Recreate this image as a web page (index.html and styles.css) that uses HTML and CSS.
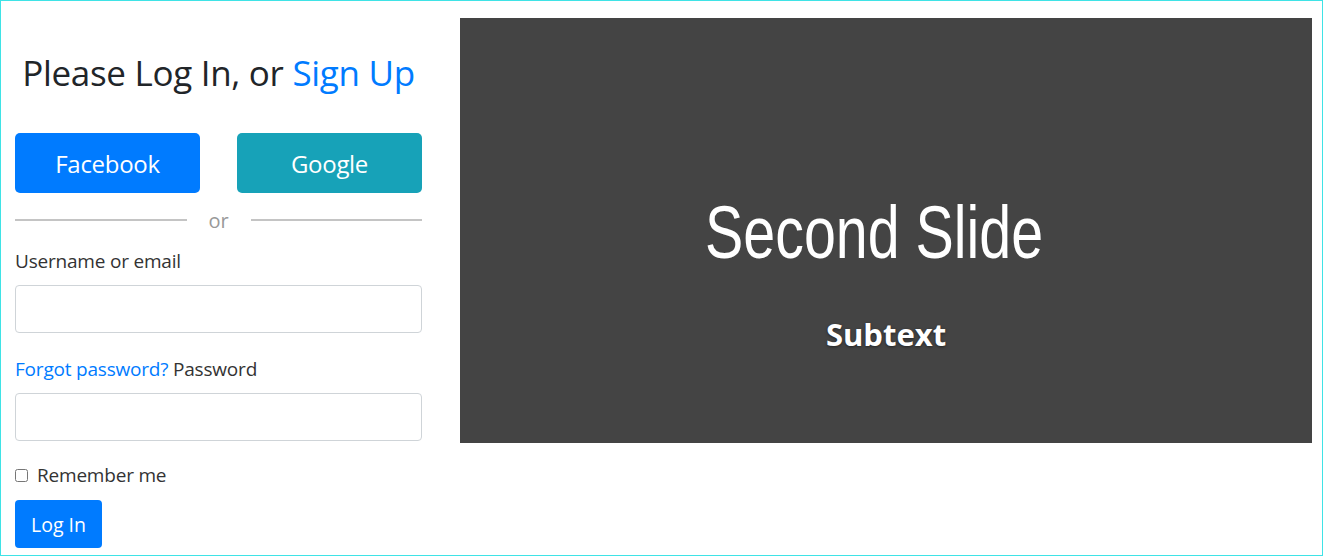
FILE: index.html
```html
<!DOCTYPE html>
<html>
<head>
<meta charset="utf-8">
<link rel="stylesheet" href="styles.css">
</head>
<body>
<div class="frame">
  <div class="login">
    <h2 class="title">Please Log In, or <a href="#" class="link">Sign Up</a></h2>
    <div class="social">
      <a href="#" class="btn btn-fb">Facebook</a>
      <a href="#" class="btn btn-google">Google</a>
    </div>
    <div class="divider"><span class="line"></span><span class="or">or</span><span class="line"></span></div>
    <label class="label">Username or email</label>
    <input class="input" type="text">
    <label class="label"><a href="#" class="link">Forgot password?</a> Password</label>
    <input class="input" type="password">
    <div class="remember"><input type="checkbox" class="check"><span>Remember me</span></div>
    <button class="btn-login">Log In</button>
  </div>
  <div class="slide">
    <div class="slide-title">Second Slide</div>
    <div class="slide-sub">Subtext</div>
  </div>
</div>
</body>
</html>
```
FILE: styles.css
```css
* { box-sizing: border-box; }
html, body { margin: 0; padding: 0; background: #fff; }
body { font-family: "Open Sans", "Noto Sans", sans-serif; color: #212529; }
.frame {
  width: 1323px;
  height: 556px;
  border: 1px solid #3fe3e6;
  display: grid;
  grid-template-columns: 407px 852px;
  column-gap: 38px;
  padding: 17px 0 0 14px;
  overflow: hidden;
}
.login { display: flex; flex-direction: column; }
.title {
  margin: 29px 0 0;
  font-size: 35px;
  font-weight: 400;
  text-align: center;
  line-height: 52px;
  letter-spacing: -0.3px;
  white-space: nowrap;
}
.link { color: #007bff; text-decoration: none; }
.social { display: flex; justify-content: space-between; margin-top: 34px; }
.btn {
  width: 185px;
  height: 60px;
  border-radius: 5px;
  color: #fff;
  text-decoration: none;
  font-size: 24px;
  display: flex;
  align-items: center;
  justify-content: center;
  letter-spacing: -0.3px;
}
.btn-fb { background: #007bff; }
.btn-google { background: #17a2b8; }
.divider { display: flex; align-items: center; height: 54px; }
.line { flex: 1; height: 2px; background: #c4c4c4; }
.or { width: 64px; text-align: center; color: #999; font-size: 20px; }
.label { font-size: 19px; line-height: 28px; letter-spacing: -0.2px; margin-top: 0; color: #333; }
.input {
  width: 407px;
  height: 48px;
  border: 1px solid #cfd4d8;
  border-radius: 4px;
  margin: 10px 0 22px;
  font-size: 16px;
}
.remember { display: flex; align-items: center; font-size: 19px; margin-top: -3px; height: 30px; letter-spacing: -0.2px; color: #333; }
.check { width: 13px; height: 13px; margin: 0 9px 0 0; }
.btn-login {
  margin-top: 10px;
  width: 87px;
  height: 48px;
  border: 0;
  border-radius: 4px;
  background: #007bff;
  color: #fff;
  font-family: "Open Sans", "Noto Sans", sans-serif;
  font-size: 19.5px;
  padding: 0;
}
.slide {
  background: #444;
  height: 425px;
  display: flex;
  flex-direction: column;
  align-items: center;
  color: #fff;
}
.slide-title {
  margin-top: 168px;
  font-family: "Liberation Sans", Arial, sans-serif;
  font-size: 74px;
  line-height: 94px;
  transform: scaleX(0.775);
  margin-right: 24px;
}
.slide-sub {
  margin-top: 33px;
  font-size: 31px;
  font-weight: 700;
  text-shadow: 0 1px 3px rgba(0,0,0,0.5);
}
```
